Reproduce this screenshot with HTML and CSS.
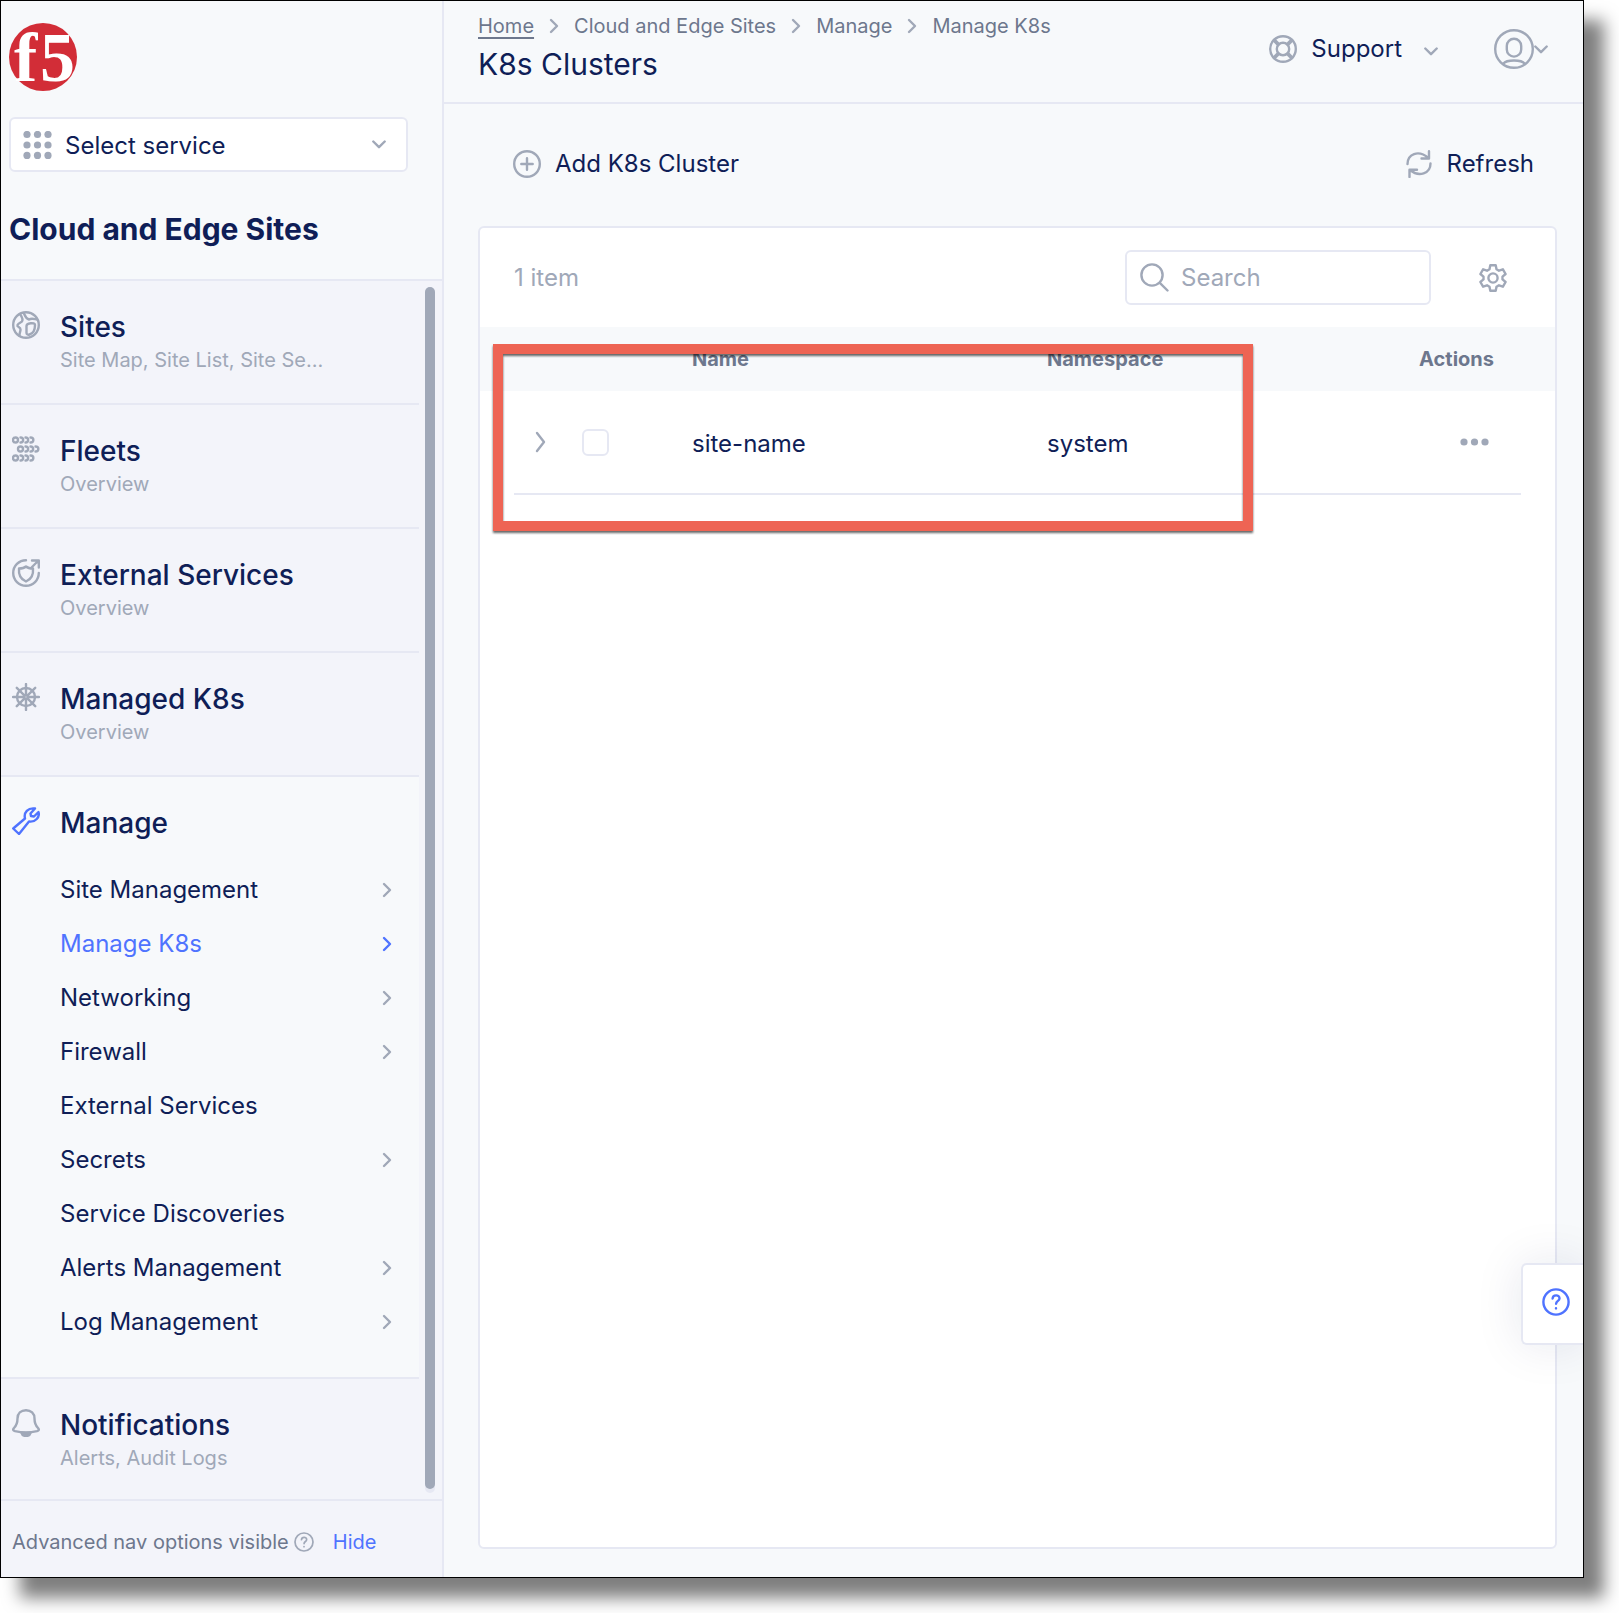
FILE: index.html
```html
<!DOCTYPE html>
<html lang="en">
<head>
<meta charset="utf-8">
<meta name="viewport" content="width=device-width, initial-scale=1">
<title>K8s Clusters</title>
<link rel="stylesheet" href="styles.css">
</head>
<body>
<svg class="sprite" aria-hidden="true">
  <symbol id="chev-right" viewBox="0 0 10 16"><path d="M2 2l6 6-6 6"/></symbol>
  <symbol id="chev-down" viewBox="0 0 14 9"><path d="M1.300 1.500L7 7.200l5.700-5.700"/></symbol>
</svg>
<div class="window">
  <aside class="sidebar">
    <div class="sidebar-top">
      <a class="logo" href="#" aria-label="F5 home">
        <svg width="68" height="68" viewBox="0 0 68 68">
          <circle cx="34" cy="34" r="34" fill="#d22d37"/>
          <g class="logo-text"><text x="5" y="58">f</text><text x="31" y="58">5</text></g>
        </svg>
      </a>
      <div class="service">
        <svg class="solid" width="29" height="28" viewBox="0 0 29 28"><circle cx="4" cy="3.500" r="3.600"/><circle cx="14.500" cy="3.500" r="3.600"/><circle cx="25" cy="3.500" r="3.600"/><circle cx="4" cy="14" r="3.600"/><circle cx="14.500" cy="14" r="3.600"/><circle cx="25" cy="14" r="3.600"/><circle cx="4" cy="24.400" r="3.600"/><circle cx="14.500" cy="24.400" r="3.600"/><circle cx="25" cy="24.400" r="3.600"/></svg>
        <select aria-label="Select service"><option>Select service</option></select>
        <svg class="line" width="14" height="9"><use href="#chev-down"/></svg>
      </div>
      <h2 class="workspace">Cloud and Edge Sites</h2>
    </div>
    <div class="scroll-area">
      <nav class="nav">
        <section class="nav-item">
          <svg class="line" width="28" height="28" viewBox="0 0 28 28"><circle cx="14" cy="14" r="12.800"/><path d="M8 3c2 3 3.500 5 2 7.500-1 1-3.500 1.500-4.500 3.500s3 2 3 4.500-1 3-1 6M12 2.500c1.500 3.500 2 5.500 5 6 2.500-1.500 5-.5 8 0M14.500 22v-7c0-3 8.500-4 8.500-1 0 4.500-2 8.500-5.500 9.500-1.500.5-3 0-3-1.500z"/></svg>
          <div><a class="nav-title" href="#">Sites</a><p class="nav-sub">Site Map, Site List, Site Se...</p></div>
        </section>
        <section class="nav-item">
          <svg class="line" width="28" height="28" viewBox="0 0 28 28"><g id="fleet-row"><circle cx="3.500" cy="5" r="2.500"/><path d="M8.500 2.500c3.500 0 3.500 5 0 5M13.500 2.500c3.500 0 3.500 5 0 5M18.500 2.500c3.800 0 3.800 5 0 5"/></g><use href="#fleet-row" x="5" y="9"/><use href="#fleet-row" y="18"/></svg>
          <div><a class="nav-title" href="#">Fleets</a><p class="nav-sub">Overview</p></div>
        </section>
        <section class="nav-item">
          <svg class="line" width="28" height="28" viewBox="0 0 28 28"><path d="M14 1.200A12.800 12.800 0 1 0 26.800 14M20 1.500h6.800v7M26 2l-6 6M14 7.500c-2 1.800-4.500 2-7 2C6.500 15 8 20 14 22.500 20 20 21.500 15 21 9.500c-2.500 0-5-.2-7-2z"/></svg>
          <div><a class="nav-title" href="#">External Services</a><p class="nav-sub">Overview</p></div>
        </section>
        <section class="nav-item">
          <svg class="line" width="28" height="28" viewBox="0 0 28 28"><circle cx="14" cy="14" r="9"/><circle cx="14" cy="14" r="2"/><path d="M14 1v11M14 16v11M1 14h11M16 14h11M4.800 4.800l7.800 7.800M15.400 15.400l7.800 7.800M23.200 4.800l-7.800 7.800M12.600 15.400l-7.800 7.800"/></svg>
          <div><a class="nav-title" href="#">Managed K8s</a><p class="nav-sub">Overview</p></div>
        </section>
        <section class="nav-item open">
          <svg class="line blue" width="28" height="28" viewBox="0 0 28 28"><path d="M1.200 21.500L13 11.500C11.500 5.500 16 .5 23 1.500l-4.500 5 .5 2.500 3 .5 4.500-4.500c1.500 5-3 10.500-9.500 9.500L7 27z"/></svg>
          <div class="nav-body">
            <a class="nav-title" href="#">Manage</a>
            <ul class="subnav">
              <li><a href="#">Site Management<svg class="line" width="10" height="16"><use href="#chev-right"/></svg></a></li>
              <li><a href="#" class="current">Manage K8s<svg class="line blue" width="10" height="16"><use href="#chev-right"/></svg></a></li>
              <li><a href="#">Networking<svg class="line" width="10" height="16"><use href="#chev-right"/></svg></a></li>
              <li><a href="#">Firewall<svg class="line" width="10" height="16"><use href="#chev-right"/></svg></a></li>
              <li><a href="#">External Services</a></li>
              <li><a href="#">Secrets<svg class="line" width="10" height="16"><use href="#chev-right"/></svg></a></li>
              <li><a href="#">Service Discoveries</a></li>
              <li><a href="#">Alerts Management<svg class="line" width="10" height="16"><use href="#chev-right"/></svg></a></li>
              <li><a href="#">Log Management<svg class="line" width="10" height="16"><use href="#chev-right"/></svg></a></li>
            </ul>
          </div>
        </section>
        <section class="nav-item">
          <svg class="line" width="28" height="28" viewBox="0 0 28 28"><path d="M14 1.200c-5 0-8.500 3.300-8.500 8.300 0 5-1 7-3.500 9.500-1.500 1.700-.8 2.600 1 3.200 6.500 1.600 15.500 1.600 22 0 1.800-.6 2.500-1.500 1-3.200-2.500-2.500-3.500-4.500-3.500-9.500 0-5-3.500-8.300-8.500-8.300z"/><path class="fill" d="M9.500 24h9c-1 4-8 4-9 0z"/></svg>
          <div><a class="nav-title" href="#">Notifications</a><p class="nav-sub">Alerts, Audit Logs</p></div>
        </section>
      </nav>
      <div class="scroll-track"><div class="scroll-thumb"></div></div>
    </div>
    <footer class="sidebar-foot">
      <span>Advanced nav options visible</span>
      <svg class="line" width="20" height="20" viewBox="0 0 28 28"><circle cx="14" cy="14" r="12.600"/><path d="M10.500 10.800c.3-4.600 7.300-4.300 7.200 0-.1 2.500-3.500 2.600-3.600 5.500M14 20.300v.2"/></svg>
      <a href="#">Hide</a>
    </footer>
  </aside>

  <main class="main">
    <header class="header">
      <div>
        <nav class="crumbs" aria-label="Breadcrumb">
          <a class="home" href="#">Home</a>
          <svg class="line" width="10" height="16"><use href="#chev-right"/></svg>
          <a href="#">Cloud and Edge Sites</a>
          <svg class="line" width="10" height="16"><use href="#chev-right"/></svg>
          <a href="#">Manage</a>
          <svg class="line" width="10" height="16"><use href="#chev-right"/></svg>
          <a href="#">Manage K8s</a>
        </nav>
        <h1>K8s Clusters</h1>
      </div>
      <div class="header-tools">
        <button class="support" type="button">
          <svg class="line" width="28" height="28" viewBox="0 0 28 28"><circle cx="14" cy="14" r="12.800"/><circle cx="14" cy="14" r="6.200"/><path d="M5.500 4.500l4.600 4.600M4.500 5.500l4.600 4.600M22.500 4.500l-4.600 4.600M23.500 5.500l-4.600 4.600M5.500 23.500l4.600-4.600M4.500 22.500l4.600-4.600M22.500 23.500l-4.600-4.600M23.500 22.500l-4.600-4.600"/></svg>
          Support
          <svg class="line caret" width="14" height="9"><use href="#chev-down"/></svg>
        </button>
        <button class="user" type="button" aria-label="Account">
          <svg class="line" width="40" height="40" viewBox="0 0 40 40"><circle cx="20" cy="20" r="18.800"/><rect x="12.800" y="9.800" width="14.400" height="17.800" rx="7.200"/><path d="M9.500 34.500c3-4 18-4 21 0"/></svg>
          <svg class="line" width="14" height="9"><use href="#chev-down"/></svg>
        </button>
      </div>
    </header>

    <div class="actions">
      <button type="button">
        <svg class="line" width="28" height="28" viewBox="0 0 28 28"><circle cx="14" cy="14" r="12.800"/><path d="M14 8.300v11.400M8.300 14h11.400"/></svg>
        Add K8s Cluster
      </button>
      <button type="button">
        <svg class="line" width="28" height="28" viewBox="0 0 28 28"><path d="M2.500 14C2.500 4.500 13-1 23.500 8M24 1.200V8.500h-7.500M25.500 13.500c0 10-11.500 14-20.500 6.500M4.500 27v-7.300H12"/></svg>
        Refresh
      </button>
    </div>

    <section class="card">
      <div class="card-head">
        <span class="count">1 item</span>
        <label class="search">
          <svg class="line" width="29" height="29" viewBox="0 0 29 29"><circle cx="12" cy="12" r="10.600"/><path d="M19.800 19.800l7.700 7.700"/></svg>
          <input type="text" placeholder="Search" aria-label="Search">
        </label>
        <button type="button" aria-label="Table settings">
          <svg class="line" width="28" height="28" viewBox="0 0 28 28"><circle cx="14" cy="14" r="4.600"/><path d="M11.300 1.200h5.400l.8 4 2.500 1.500 3.900-1.400 2.700 4.700-3.100 2.600v2.800l3.100 2.600-2.700 4.700-3.900-1.400-2.500 1.500-.8 4h-5.400l-.8-4L8 21.300l-3.900 1.400L1.400 18l3.100-2.600v-2.800L1.400 10l2.700-4.700L8 6.700l2.500-1.500z"/></svg>
        </button>
      </div>
      <div class="table-wrap">
        <table>
          <thead>
            <tr><th class="c-expand"></th><th class="c-check"></th><th class="c-name">Name</th><th>Namespace</th><th class="c-act">Actions</th></tr>
          </thead>
          <tbody>
            <tr>
              <td class="c-expand"><button type="button" aria-label="Expand row"><svg class="line" width="12" height="22" viewBox="0 0 12 22"><path d="M2 2l7 9-7 9"/></svg></button></td>
              <td class="c-check"><input type="checkbox" aria-label="Select site-name"></td>
              <td class="c-text">site-name</td>
              <td class="c-text">system</td>
              <td class="c-act"><button type="button" aria-label="Row actions"><svg class="solid" width="34" height="8" viewBox="0 0 34 8"><circle cx="4" cy="4" r="3.600"/><circle cx="14.500" cy="4" r="3.600"/><circle cx="25" cy="4" r="3.600"/></svg></button></td>
            </tr>
          </tbody>
        </table>
        <div class="callout"></div>
      </div>
    </section>

    <button class="help" type="button" aria-label="Help">
      <svg class="line blue" width="28" height="28" viewBox="0 0 28 28"><circle cx="14" cy="14" r="12.600"/><path d="M10.600 10.500c.3-4.300 7-4.100 6.900 0-.1 2.400-3.300 2.500-3.400 5.300M14 20.200v.2"/></svg>
    </button>
  </main>
</div>
</body>
</html>
```
FILE: styles.css
```css
:root {
  --navy: #0f1e57;
  --slate: #6d778d;
  --grey: #a0a8b8;
  --line: #e6e8f3;
  --page: #f7f9fb;
  --panel: #f3f4fa;
  --blue: #4f73ff;
}

* { box-sizing: border-box; }

body {
  margin: 0;
  padding: 0 35px 35px 0;
  background: #fff;
  color: var(--navy);
  font: 400 24px/32px Inter, "Liberation Sans", sans-serif;
}

h1, h2, p, ul { margin: 0; padding: 0; }
ul { list-style: none; }
a { color: inherit; text-decoration: none; }

button, input, select {
  border: 0;
  padding: 0;
  background: none;
  color: inherit;
  font: inherit;
}

button { display: flex; align-items: center; }

svg { display: block; flex: none; }
.sprite { position: absolute; width: 0; height: 0; }

.line {
  fill: none;
  stroke: var(--grey);
  stroke-width: 2.4;
  stroke-linecap: round;
  stroke-linejoin: round;
}
.line .fill, .solid { fill: var(--grey); }
.line.blue { stroke: var(--blue); }

.window {
  display: flex;
  min-height: calc(100vh - 35px);
  border: 1px solid #000;
  background: var(--page);
  box-shadow: 20px 20px 16px rgba(0, 0, 0, .5);
}

/* Sidebar */
.sidebar {
  display: flex;
  flex: none;
  flex-direction: column;
  width: 443px;
  border-right: 2px solid var(--line);
}

.sidebar-top { padding: 22px 34px 30px 8px; }
.logo { display: block; width: 68px; }
.logo svg { overflow: visible; }
.logo-text {
  fill: #fff;
  font: 700 70px "Liberation Serif", serif;
}

.service {
  display: flex;
  align-items: center;
  gap: 13px;
  height: 55px;
  margin-top: 26px;
  padding: 0 20px 0 12px;
  border: 2px solid var(--line);
  border-radius: 6px;
  background: #fff;
}
.service select {
  flex: 1;
  min-width: 0;
  padding-top: 2px;
  appearance: none;
}

.workspace {
  margin-top: 37px;
  font-size: 30px;
  line-height: 40px;
}

.scroll-area {
  display: flex;
  flex: 1;
  gap: 6px;
  border-top: 2px solid var(--line);
  background: var(--panel);
}
.nav {
  display: flex;
  flex: 1;
  flex-direction: column;
}
.nav-item {
  display: flex;
  gap: 20px;
  padding: 28px 0 28px 11px;
  border-bottom: 2px solid var(--line);
}
.nav-item:last-child { padding-bottom: 26px; border-bottom: 0; }
.nav-item > svg { margin-top: 2px; }
.nav-item.open { background: var(--page); }
.nav-title {
  display: block;
  font-size: 28px;
  font-weight: 500;
  line-height: 36px;
}
.nav-sub {
  color: var(--grey);
  font-size: 20px;
  line-height: 30px;
}
.nav-body { flex: 1; }
.subnav { margin-top: 22px; }
.subnav a {
  display: flex;
  align-items: center;
  justify-content: space-between;
  height: 54px;
  padding-right: 27px;
}
.subnav .current { color: var(--blue); }

.scroll-track {
  width: 10px;
  margin: 6px 7px 6px 0;
  padding-bottom: 4px;
  border-radius: 5px;
  background: var(--line);
}
.scroll-thumb {
  height: 100%;
  border-radius: 5px;
  background: var(--grey);
}

.sidebar-foot {
  display: flex;
  align-items: center;
  height: 78px;
  padding: 5px 0 0 11px;
  border-top: 2px solid var(--line);
  background: var(--panel);
  color: var(--slate);
  font-size: 20px;
}
.sidebar-foot svg { margin: 0 19px 0 5px; }
.sidebar-foot a { color: var(--blue); }

/* Main column */
.main {
  position: relative;
  display: flex;
  flex: 1;
  flex-direction: column;
  min-width: 0;
  overflow: hidden;
}

.header {
  display: flex;
  justify-content: space-between;
  padding: 11px 35px 16px 34px;
  border-bottom: 2px solid var(--line);
}
.crumbs {
  display: flex;
  align-items: center;
  gap: 15px;
  color: var(--slate);
  font-size: 20px;
  line-height: 28px;
}
.home {
  text-decoration: underline 2px;
  text-underline-offset: 4px;
}
.header h1 {
  margin-top: 4px;
  font-size: 30px;
  font-weight: 400;
  line-height: 40px;
}
.header-tools {
  display: flex;
  align-items: center;
  gap: 56px;
  height: 74px;
}
.support { gap: 14px; }
.caret { margin: 4px 0 0 8px; }

.actions {
  display: flex;
  justify-content: space-between;
  padding: 40px 49px 42px 69px;
}
.actions button { gap: 14px; height: 40px; }

.card {
  flex: 1;
  margin: 0 26px 28px 34px;
  border: 2px solid var(--line);
  border-radius: 6px;
  background: #fff;
}
.card-head {
  display: flex;
  align-items: center;
  padding: 22px 48px 22px 34px;
}
.count { flex: 1; color: var(--grey); }
.search {
  display: flex;
  align-items: center;
  gap: 12px;
  width: 306px;
  height: 55px;
  margin-right: 48px;
  padding: 0 13px;
  border: 2px solid var(--line);
  border-radius: 6px;
}
.search input { flex: 1; min-width: 0; }
.search input::placeholder { color: var(--grey); opacity: 1; }

.table-wrap { position: relative; padding: 0 34px; }
table {
  width: 100%;
  border-collapse: separate;
  border-spacing: 0;
}
th {
  height: 64px;
  padding: 0;
  background: var(--page);
  color: var(--slate);
  font-size: 20px;
  font-weight: 700;
  text-align: left;
}
th:first-child { box-shadow: -34px 0 0 var(--page); }
th:last-child { box-shadow: 34px 0 0 var(--page); }
td {
  height: 104px;
  padding: 0;
  border-bottom: 2px solid var(--line);
}
.c-expand { width: 54px; padding-left: 21px; }
.c-check { width: 124px; padding-left: 14px; }
.c-name { width: 355px; }
.c-text { padding-top: 4px; }
.c-act { padding-right: 27px; text-align: right; }
.c-act button { margin-left: auto; }

input[type="checkbox"] {
  display: block;
  width: 27px;
  height: 27px;
  margin: 0;
  border: 2px solid var(--line);
  border-radius: 6px;
  background: #fff;
  appearance: none;
}

/* Annotation frame over the table */
.callout {
  position: absolute;
  top: 17px;
  left: 13px;
  width: 760px;
  height: 187px;
  border: 10px solid #ee6454;
  filter: drop-shadow(0 2px 1px rgba(0, 0, 0, .6));
  pointer-events: none;
}

.help {
  position: absolute;
  right: 0;
  bottom: 232px;
  width: 62px;
  height: 82px;
  padding: 0 0 4px 19px;
  border: 2px solid var(--line);
  border-right: 0;
  border-radius: 6px 0 0 6px;
  background: #fff;
  box-shadow: 0 0 48px rgba(15, 30, 87, .1);
}
```
